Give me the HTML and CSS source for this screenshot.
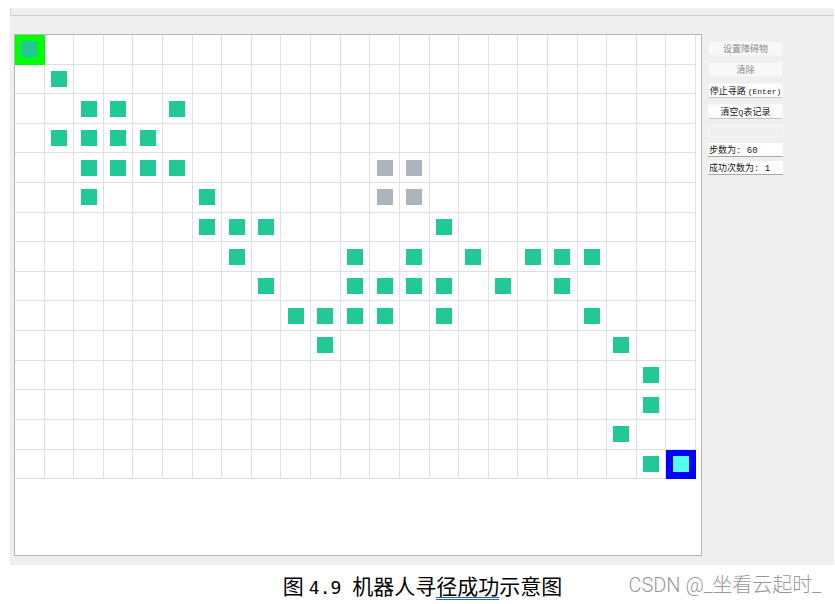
FILE: index.html
```
<!DOCTYPE html>
<html lang="zh-CN">
<head>
<meta charset="utf-8">
<title>机器人寻径</title>
<link rel="stylesheet" href="styles.css">
</head>
<body>
<main class="window">
  <div class="menubar"></div>
  <div class="workspace">
    <section class="canvas">
      <div class="board" id="board"></div>
    </section>
    <aside class="panel">
      <button class="btn" type="button" disabled>设置障碍物</button>
      <button class="btn" type="button" disabled>清除</button>
      <button class="btn" type="button">停止寻路 <span class="latin">(Enter)</span></button>
      <button class="btn" type="button">清空<span class="latin">Q</span>表记录</button>
      <div class="slot"></div>
      <div class="stats">
        <output class="stat">步数为<span class="latin">: 60</span></output>
        <output class="stat">成功次数为<span class="latin">: 1</span></output>
      </div>
    </aside>
  </div>
</main>
<footer class="footer">
  <p class="caption">图<span class="figure-number">4.9 </span>机器人寻<span class="marked">径成功</span>示意图</p>
  <p class="watermark">CSDN @_坐看云起时_</p>
</footer>
<script src="board.js"></script>
</body>
</html>
```
FILE: styles.css
```
* { box-sizing: border-box; }
body {
  margin: 8px 0 0 10px;
  background: #fff;
  color: #000;
  font-family: "Noto Sans CJK SC", sans-serif;
}
.window { background: #efefef; margin-right: 1px; }
.menubar { height: 8px; border-bottom: 1px solid #cdcdcd; border-left: 1px solid #d4d4d4; }
.workspace { display: flex; gap: 6px; padding: 18px 51px 9px 4px; }
.canvas {
  flex: 1;
  padding: 0 5px 76px 0;
  border: 1px solid #b4b5ba;
  background: #fff;
}
.board {
  display: grid;
  grid-template-columns: repeat(23, 1fr);
  grid-template-rows: repeat(15, 1fr);
  aspect-ratio: 23 / 15;
}
.cell {
  display: grid;
  place-items: center;
  border-right: 1px solid #e0e0e0;
  border-bottom: 1px solid #e0e0e0;
}
.cell.start { background: #00ff00; border-color: #00ff00; }
.cell.goal { background: #0000ff; border-color: #0000ff; }
.mark { width: 16px; height: 16px; }
.mark.path { background: #22c997; }
.mark.wall { background: #acb5bd; }
.mark.robot { background: #55fff0; }
.panel {
  display: flex;
  flex-direction: column;
  width: 75px;
  padding-top: 7px;
  gap: 6px;
}
.btn, .stat {
  font-family: inherit;
  font-size: 9px;
  line-height: 13px;
  white-space: nowrap;
  color: #222;
}
.btn {
  height: 15px;
  padding: 0;
  border: 1px solid #f8f8f8;
  border-bottom-color: #c4c4c4;
  border-radius: 2px;
  background: #fdfdfd;
}
.btn:disabled { color: #8a8a8a; background: #f8f8f8; border-color: #f3f3f3; }
.latin { font-family: "Liberation Mono", monospace; font-size: 8px; }
.stat .latin, .latin:not(:last-child) { font-size: 9px; }
.slot { height: 12px; border: 1px solid #f4f4f4; }
.stats { display: grid; gap: 4px; }
.stat {
  height: 14px;
  padding-left: 1px;
  background: #fff;
  border-bottom: 1px solid #a8a8a8;
}
.footer {
  display: grid;
  grid-template-columns: 1fr auto 1fr;
  align-items: start;
  padding-top: 6px;
}
.caption { grid-column: 2; margin: 0; font-size: 21px; line-height: 28px; white-space: nowrap; }
.figure-number {
  margin-left: 5px;
  font-family: "DejaVu Sans Mono", monospace;
  font-size: 18px;
  white-space: pre;
}
.marked {
  display: inline-block;
  line-height: 24px;
  border-bottom: 3px double #2563d9;
}
.watermark {
  margin: 0 14px 0 0;
  justify-self: end;
  font-family: Roboto, "Noto Sans CJK SC", sans-serif;
  font-size: 20px;
  font-weight: 300;
  line-height: 28px;
  color: #999;
  white-space: nowrap;
}
```
FILE: board.js
```
const COLUMNS = 23;
const ROWS = 15;

// Visited columns for each row of the board.
const visited = [
  [0], [1], [2, 3, 5], [1, 2, 3, 4], [2, 3, 4, 5],
  [2, 6], [6, 7, 8, 14], [7, 11, 13, 15, 17, 18, 19],
  [8, 11, 12, 13, 14, 16, 18], [9, 10, 11, 12, 14, 19],
  [10, 20], [21], [21], [20], [21]
];
const walls = { 4: [12, 13], 5: [12, 13] };

const board = document.getElementById("board");
for (let row = 0; row < ROWS; row++) {
  for (let col = 0; col < COLUMNS; col++) {
    const cell = document.createElement("div");
    cell.className = "cell";
    const isGoal = row === ROWS - 1 && col === COLUMNS - 1;
    if (row === 0 && col === 0) cell.classList.add("start");
    if (isGoal) cell.classList.add("goal");
    let kind = "";
    if (isGoal) kind = "robot";
    else if (visited[row].includes(col)) kind = "path";
    else if ((walls[row] || []).includes(col)) kind = "wall";
    if (kind) {
      const mark = document.createElement("span");
      mark.className = "mark " + kind;
      cell.append(mark);
    }
    board.append(cell);
  }
}
```
